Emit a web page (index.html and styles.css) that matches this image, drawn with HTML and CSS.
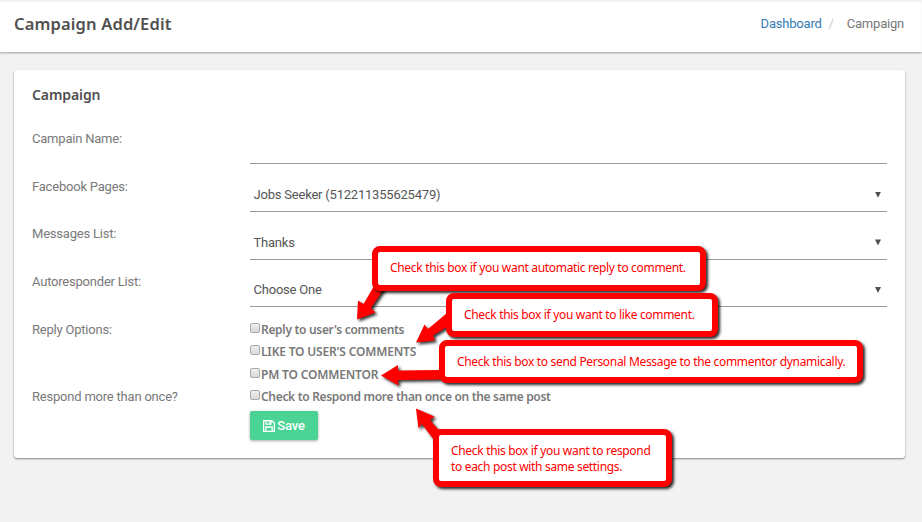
FILE: index.html
```html
<!DOCTYPE html>
<html lang="en">
<head>
<meta charset="utf-8">
<title>Campaign Add/Edit</title>
<link rel="stylesheet" href="styles.css">
</head>
<body>
<header class="topbar">
  <h1>Campaign Add/Edit</h1>
  <nav class="crumbs"><a>Dashboard</a><span class="slash">/</span><span>Campaign</span></nav>
</header>
<main class="card">
  <h2>Campaign</h2>
  <div class="row"><span class="label">Campain Name:</span><div class="field"></div></div>
  <div class="row"><span class="label">Facebook Pages:</span><div class="field"><span>Jobs Seeker (512211355625479)</span><i class="caret"></i></div></div>
  <div class="row"><span class="label">Messages List:</span><div class="field tall"><span>Thanks</span><i class="caret"></i></div></div>
  <div class="row"><span class="label">Autoresponder List:</span><div class="field"><span>Choose One</span><i class="caret"></i></div></div>
  <div class="options">
    <span class="label">Reply Options:</span>
    <div class="checks">
      <div class="check"><i class="box"></i><span>Reply to user's comments</span></div>
      <div class="check caps"><i class="box"></i><span>LIKE TO USER'S COMMENTS</span></div>
      <div class="check caps"><i class="box"></i><span>PM TO COMMENTOR</span></div>
    </div>
    <span class="label">Respond more than once?</span>
    <div class="check"><i class="box"></i><span>Check to Respond more than once on the same post</span></div>
  </div>
  <div class="save">
    <svg width="12" height="12" viewBox="0 0 12 12" fill="none" stroke="#fff" stroke-width="1.3"><path d="M.6.6h8.2l2.6 2.6v8.2H.6zM3 .6v3.6h5V.6M2.8 11.4V7h6.4v4.4"/><path d="M6.6 1v2.4"/></svg>
    <span>Save</span>
  </div>
</main>
<svg class="arrows" width="922" height="522" viewBox="0 0 922 522" fill="red">
  <path d="M357 319.5L358 300.500L363.500 304L374 286H386L371 308L375.500 312.500Z"/>
  <path d="M416 342.500L424.500 324.500L428 329L447 313V327L433 335.500L435 340.500Z"/>
  <path d="M381 375.500L398 365V370.500L440 370V379.500L398 380L398.500 385.500Z"/>
  <path d="M416 408.500L434.500 416.500L430 420L442 434L434 440L422 424L418.500 428.500Z"/>
</svg>
<div class="callout a"><span>Check this box if you want automatic reply to comment.</span></div>
<div class="callout b"><span>Check this box if you want to like comment.</span></div>
<div class="callout c"><span>Check this box to send Personal Message to the commentor dynamically.</span></div>
<div class="callout d"><span>Check this box if you want to respond</span><span>to each post with same settings.</span></div>
</body>
</html>
```
FILE: styles.css
```css
* { box-sizing: border-box; }
body { margin: 0; height: 522px; overflow: hidden; background: #f2f2f2; font: 13px/18px Roboto, sans-serif; letter-spacing: -.21px; color: #797979; }
.topbar { height: 52px; background: #fff; box-shadow: 0 1px 2px rgba(0,0,0,.35), inset 0 2px 2px #f1f1f1; display: flex; justify-content: space-between; padding: 14px 18px 0 14px; }
h1, h2 { margin: 0; color: #505050; font-family: "Noto Sans", sans-serif; font-weight: 600; white-space: nowrap; }
h1 { font-size: 16.5px; line-height: 20px; letter-spacing: .15px; }
h2 { font-size: 14px; line-height: 20px; letter-spacing: -.1px; margin-bottom: 24px; }
.crumbs { line-height: 20px; display: flex; color: #777; }
.crumbs a { color: #337ab7; }
.crumbs .slash { color: #ccc; margin: 0 13px 0 7px; }
.card { margin: 18px 17px 0 14px; height: 388px; background: #fff; border-radius: 3px; box-shadow: 0 1px 2px rgba(0,0,0,.45); padding: 15px 18px 0; }
.row { display: grid; grid-template-columns: 218px 1fr; height: 47.7px; }
.label { padding-top: 1px; }
.field { height: 35px; border-bottom: 1px solid #999; color: #555; display: flex; justify-content: space-between; align-items: flex-end; padding: 0 6px 7px 3.5px; }
.field.tall { height: 36px; }
.caret { width: 6px; height: 6px; background: #505050; clip-path: polygon(0 0, 100% 0, 50% 100%); margin-bottom: 6px; }
.field.tall .caret { margin-bottom: 7px; }
.options { display: grid; grid-template-columns: 218px 1fr; }
.check { height: 22.4px; display: flex; align-items: flex-start; font: 600 12px/20px "Noto Sans", sans-serif; letter-spacing: -.31px; white-space: nowrap; }
.check.caps { letter-spacing: -.18px; }
.box { width: 10px; height: 10px; border: 1px solid #aaa; border-radius: 2px; background: linear-gradient(#eee, #d9d9d9); margin: 3px 1px 0 0; }
.save { width: 68px; height: 29px; margin: 2px 0 0 218px; background: #4bd396; color: #fff; font-weight: 500; border-radius: 2px; box-shadow: 0 1px 3px rgba(0,0,0,.35); display: flex; align-items: center; justify-content: center; gap: 2px; }
.arrows { position: absolute; left: 0; top: 0; filter: drop-shadow(2px 2px 1.5px rgba(0,0,0,.8)); }
.callout { position: absolute; border: 6px solid red; border-radius: 8px; background: #fff; color: red; font: 12px/16px "Noto Sans", sans-serif; letter-spacing: -.32px; box-shadow: 2px 2px 3px rgba(0,0,0,.85); display: flex; flex-direction: column; justify-content: center; align-items: flex-start; white-space: nowrap; padding-left: 12px; }
.a { left: 372px; top: 246px; width: 334px; height: 45px; padding-bottom: 1px; }
.b { left: 446px; top: 293px; width: 272px; height: 44px; }
.c { left: 439px; top: 340px; width: 424px; height: 43px; }
.d { left: 433px; top: 429px; width: 239px; height: 58px; padding-top: 2px; }
```
